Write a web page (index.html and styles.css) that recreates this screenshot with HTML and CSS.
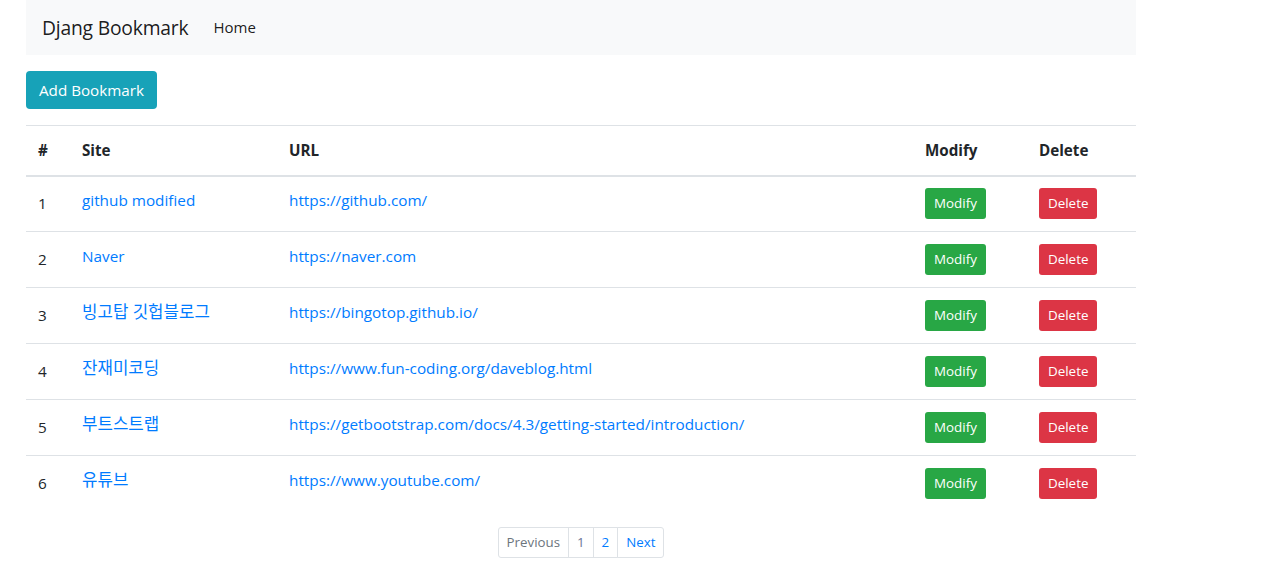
FILE: index.html
```html
<!DOCTYPE html>
<html lang="ko">
<head>
<meta charset="utf-8">
<title>Djang Bookmark</title>
<link rel="stylesheet" href="styles.css">
</head>
<body>
<div class="container">
  <nav class="navbar">
    <a class="brand" href="#">Djang Bookmark</a>
    <a class="nav-link" href="#">Home</a>
  </nav>
  <div class="actions">
    <a class="btn btn-info" href="#">Add Bookmark</a>
  </div>
  <table class="table">
    <colgroup>
      <col class="c-num"><col class="c-site"><col class="c-url"><col class="c-mod"><col class="c-del">
    </colgroup>
    <thead>
      <tr><th>#</th><th>Site</th><th>URL</th><th>Modify</th><th>Delete</th></tr>
    </thead>
    <tbody>
      <tr><td>1</td><td><a href="#">github modified</a></td><td><a href="#">https://github.com/</a></td><td><a class="btn-sm btn-success" href="#">Modify</a></td><td><a class="btn-sm btn-danger" href="#">Delete</a></td></tr>
      <tr><td>2</td><td><a href="#">Naver</a></td><td><a href="#">https://naver.com</a></td><td><a class="btn-sm btn-success" href="#">Modify</a></td><td><a class="btn-sm btn-danger" href="#">Delete</a></td></tr>
      <tr><td>3</td><td><a class="ko" href="#">빙고탑 깃헙블로그</a></td><td><a href="#">https://bingotop.github.io/</a></td><td><a class="btn-sm btn-success" href="#">Modify</a></td><td><a class="btn-sm btn-danger" href="#">Delete</a></td></tr>
      <tr><td>4</td><td><a class="ko" href="#">잔재미코딩</a></td><td><a href="#">https://www.fun-coding.org/daveblog.html</a></td><td><a class="btn-sm btn-success" href="#">Modify</a></td><td><a class="btn-sm btn-danger" href="#">Delete</a></td></tr>
      <tr><td>5</td><td><a class="ko" href="#">부트스트랩</a></td><td><a href="#">https://getbootstrap.com/docs/4.3/getting-started/introduction/</a></td><td><a class="btn-sm btn-success" href="#">Modify</a></td><td><a class="btn-sm btn-danger" href="#">Delete</a></td></tr>
      <tr><td>6</td><td><a class="ko" href="#">유튜브</a></td><td><a href="#">https://www.youtube.com/</a></td><td><a class="btn-sm btn-success" href="#">Modify</a></td><td><a class="btn-sm btn-danger" href="#">Delete</a></td></tr>
    </tbody>
  </table>
  <ul class="pagination">
    <li class="page-item disabled"><span class="page-link">Previous</span></li>
    <li class="page-item current"><a class="page-link" href="#">1</a></li>
    <li class="page-item"><a class="page-link" href="#">2</a></li>
    <li class="page-item"><a class="page-link" href="#">Next</a></li>
  </ul>
</div>
</body>
</html>
```
FILE: styles.css
```css
* { box-sizing: border-box; }
html, body { margin: 0; padding: 0; }
body {
  font-family: "Open Sans", "Noto Sans CJK KR", sans-serif;
  font-size: 16px;
  line-height: 1.5;
  color: #212529;
  background: #fff;
}
a { color: #007bff; text-decoration: none; }
.container {
  width: 1110px;
  margin-left: 26px;
}
.navbar {
  display: flex;
  align-items: center;
  background: #f8f9fa;
  padding: 8px 16px;
  height: 55px;
}
.brand {
  font-size: 19.3px;
  color: rgba(0,0,0,.9);
  margin-right: 25px;
  line-height: 30px;
  letter-spacing: -0.2px;
}
.nav-link {
  color: rgba(0,0,0,.9);
  font-size: 15px;
  padding: 8px 0;
}
.actions {
  padding-top: 16px;
  margin-bottom: 16px;
}
.btn {
  display: inline-block;
  height: 38px;
  line-height: 38px;
  padding: 0 13px;
  border-radius: 4px;
  font-size: 15.2px;
  color: #fff;
}
.btn-info { background: #17a2b8; }
.table {
  width: 100%;
  border-collapse: collapse;
  table-layout: fixed;
  border-top: 1px solid #dee2e6;
}
.c-num { width: 44px; }
.c-site { width: 207px; }
.c-url { width: 636px; }
.c-mod { width: 114px; }
.c-del { width: 109px; }
.table th {
  text-align: left;
  font-weight: 700;
  font-size: 15.2px;
  padding: 0 12px;
  height: 50px;
  border-bottom: 2px solid #dee2e6;
  vertical-align: middle;
}
.table td {
  padding: 0 12px;
  height: 56px;
  border-top: 1px solid #dee2e6;
  font-size: 15.3px;
  vertical-align: middle;
  white-space: nowrap;
}
.table tbody tr:first-child td { border-top: 0; }
.table td:first-child { color: #212529; }
.table td a { position: relative; top: -3px; }
.table td a.ko { font-size: 16.8px; top: -4px; }
.table td .btn-sm { top: 0; }
.btn-sm {
  display: inline-block;
  height: 31px;
  line-height: 31px;
  padding: 0 9px;
  font-size: 13.4px;
  border-radius: 3px;
  color: #fff;
}
.btn-success { background: #28a745; }
.btn-danger { background: #dc3545; }
.pagination {
  list-style: none;
  margin: 15px 0 0;
  padding: 0;
  display: flex;
  justify-content: center;
}
.page-link {
  display: block;
  height: 31px;
  line-height: 29px;
  padding: 0 8px;
  font-size: 13.3px;
  border: 1px solid #dee2e6;
  margin-left: -1px;
  color: #007bff;
  background: #fff;
}
.page-item:first-child .page-link { border-radius: 3px 0 0 3px; margin-left: 0; }
.page-item:last-child .page-link { border-radius: 0 3px 3px 0; }
.disabled .page-link { color: #6c757d; }
.current .page-link { color: #6c7596; }
```
